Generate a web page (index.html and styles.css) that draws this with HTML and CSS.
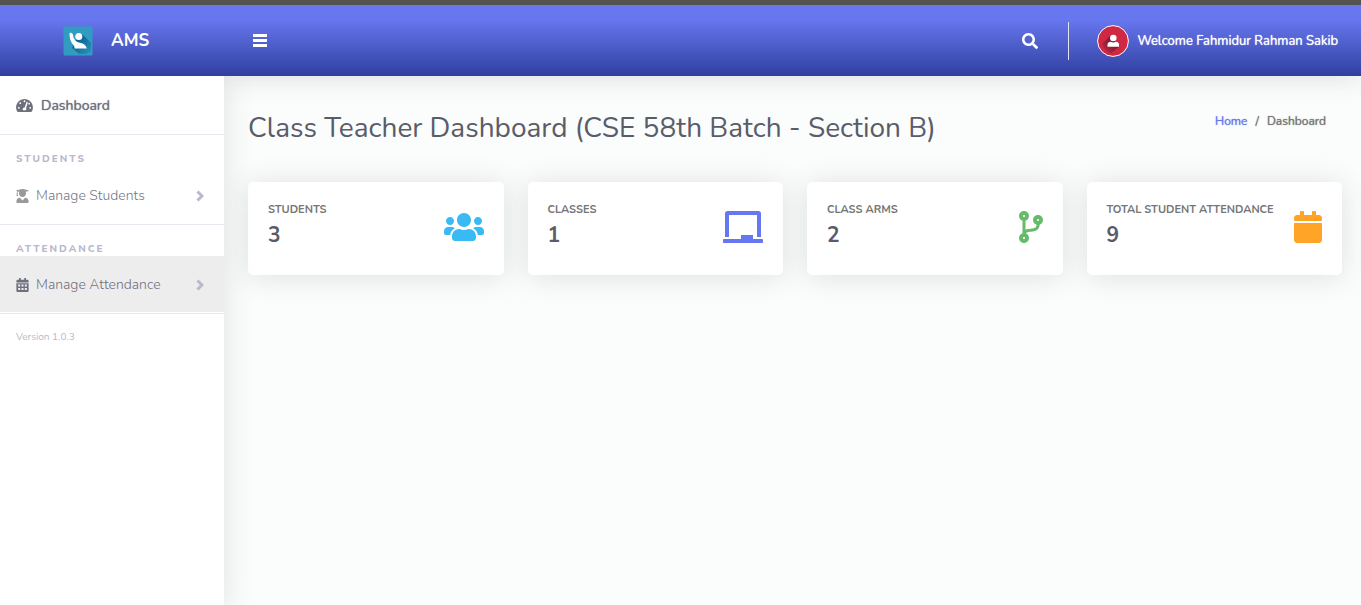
FILE: index.html
```html
<!DOCTYPE html>
<html lang="en">
<head>
<meta charset="utf-8">
<title>AMS - Dashboard</title>
<link rel="stylesheet" href="styles.css">
</head>
<body>
<header class="topbar">
  <a class="brand" href="#">
    <svg class="brand-logo" viewBox="0 0 30 30" aria-hidden="true">
      <defs><linearGradient id="logo-shade" x1="0" y1="0" x2="1" y2="1"><stop offset="0.3" stop-color="#096394"/><stop offset="1" stop-color="#096394" stop-opacity="0.1"/></linearGradient></defs>
      <rect x="0.5" y="0.5" width="29" height="29" rx="1.5" fill="#329bc1"/>
      <path d="M17 8L20 9L28 17V25L24 28H16L9 22L13 14Z" fill="url(#logo-shade)"/>
      <circle cx="15.8" cy="10.5" r="3.5" fill="#fff"/>
      <path d="M6.500 7.500Q6.500 6.300 8 6.800Q9.800 7.200 10 9Q10.300 13 12.500 14.800Q14.500 16.500 18 17Q22.800 18 23.800 22.500H11.500Q11.800 20.500 10.500 19Q6.500 15 6.500 8Z" fill="#fff"/>
    </svg>
    <span>AMS</span>
  </a>
  <button class="icon-button menu-button" type="button" aria-label="Toggle menu">
    <svg class="menu-icon" viewBox="0 0 14 14"><path d="M0 0h14v3H0zM0 5h14v3H0zM0 10h14v3H0z"/></svg>
  </button>
  <div class="topbar-tools">
    <button class="icon-button" type="button" aria-label="Search">
      <svg class="search-icon" viewBox="0 0 512 512"><path d="M505 442.700L405.300 343c-4.500-4.500-10.600-7-17-7H372c27.600-35.300 44-79.700 44-128C416 93.100 322.900 0 208 0S0 93.100 0 208s93.100 208 208 208c48.300 0 92.700-16.400 128-44v16.300c0 6.400 2.500 12.500 7 17l99.700 99.700c9.400 9.400 24.600 9.400 33.900 0l28.300-28.300c9.400-9.400 9.400-24.600.1-34zM208 336c-70.700 0-128-57.200-128-128 0-70.700 57.200-128 128-128 70.700 0 128 57.200 128 128 0 70.700-57.200 128-128 128z"/></svg>
    </button>
    <span class="divider"></span>
    <a class="profile" href="#">
      <svg class="avatar" viewBox="0 0 32 32" aria-hidden="true">
        <defs><linearGradient id="avatar-shade" x1="1" y1="0" x2="0" y2="1"><stop offset="0.3" stop-color="#741a2f"/><stop offset="1" stop-color="#d02842"/></linearGradient></defs>
        <circle cx="16" cy="16" r="15.4" fill="#d02842" stroke="#fff"/>
        <path d="M13.500 10.500L5 19Q7 26 14 28.500L22 21.500Z" fill="url(#avatar-shade)"/>
        <circle cx="16.300" cy="13" r="3.300" fill="#fff"/>
        <path d="M10.500 21.700V19.800Q10.500 17 13.500 16.700Q16.300 18.200 19.100 16.700Q22 17 22 19.800V21.700Z" fill="#fff"/>
      </svg>
      <span>Welcome Fahmidur Rahman Sakib</span>
    </a>
  </div>
</header>
<div class="shell">
  <nav class="sidebar">
    <a class="nav-link nav-home" href="#">
      <svg class="gauge-icon" viewBox="0 0 576 512"><path d="M288 32C128.940 32 0 160.940 0 320c0 52.800 14.250 102.260 39.060 144.800 5.610 9.620 16.300 15.200 27.440 15.200h443c11.140 0 21.830-5.580 27.440-15.200C561.750 422.260 576 372.800 576 320c0-159.060-128.940-288-288-288z"/><g class="gauge-marks"><circle cx="288" cy="112" r="32"/><circle cx="144" cy="176" r="32"/><circle cx="96" cy="336" r="32"/><circle cx="480" cy="336" r="32"/><circle cx="446" cy="194" r="30"/><path d="M360 132L405 147L343 343Q357 384 338 416H238Q216 384 235 350Q252 323 294 320Z"/></g></svg>
      <span>Dashboard</span>
    </a>
    <h2 class="nav-heading">Students</h2>
    <a class="nav-link nav-students" href="#">
      <svg class="nav-icon" viewBox="0 0 448 512"><path d="M319.400 320.600L224 416l-95.400-95.400C57.100 323.700 0 382.200 0 454.400v9.600c0 26.500 21.500 48 48 48h352c26.500 0 48-21.500 48-48v-9.600c0-72.200-57.100-130.700-128.600-133.800zM13.600 79.800l6.400 1.500v58.400c-7 4.200-12 11.500-12 20.300 0 8.400 4.600 15.400 11.100 19.700L3.500 242c-1.700 6.900 2.100 14 7.600 14h41.800c5.500 0 9.300-7.100 7.600-14l-15.600-62.300C51.400 175.400 56 168.400 56 160c0-8.800-5-16.100-12-20.300V87.100l66 15.900c-8.600 17.200-14 36.400-14 57 0 70.700 57.300 128 128 128s128-57.300 128-128c0-20.600-5.300-39.800-14-57l96.300-23.200c18.200-4.400 18.200-27.100 0-31.500l-190.400-46c-13-3.100-26.700-3.100-39.700 0L13.600 48.200c-18.100 4.400-18.100 27.100 0 31.600z"/></svg>
      <span>Manage Students</span>
      <svg class="chevron" viewBox="0 0 8 12"><path d="M1.500 1.500L6 6L1.500 10.500"/></svg>
    </a>
    <h2 class="nav-heading">Attendance</h2>
    <a class="nav-link nav-active" href="#">
      <svg class="nav-icon" viewBox="0 0 448 512"><path fill-rule="evenodd" d="M0 192H448V464c0 26.500-21.500 48-48 48H48c-26.500 0-48-21.500-48-48zM64 236v76h76v-76zM186 236v76h76v-76zM308 236v76h76v-76zM64 364v76h76v-76zM186 364v76h76v-76zM308 364v76h76v-76zM448 148v-36c0-26.500-21.500-48-48-48h-48V12c0-6.600-5.400-12-12-12h-40c-6.600 0-12 5.400-12 12v52H160V12c0-6.600-5.400-12-12-12h-40c-6.600 0-12 5.400-12 12v52H48C21.500 64 0 85.500 0 112v36c0 6.600 5.400 12 12 12h424c6.600 0 12-5.400 12-12z"/></svg>
      <span>Manage Attendance</span>
      <svg class="chevron" viewBox="0 0 8 12"><path d="M1.500 1.500L6 6L1.500 10.500"/></svg>
    </a>
    <p class="version">Version 1.0.3</p>
  </nav>
  <main class="content">
    <div class="page-head">
      <h1>Class Teacher Dashboard (CSE 58th Batch - Section B)</h1>
      <nav class="crumbs" aria-label="Breadcrumb"><a href="#">Home</a><span>/</span><span>Dashboard</span></nav>
    </div>
    <div class="cards">
      <section class="card">
        <div><h2>Students</h2><p>3</p></div>
        <svg class="card-icon users" viewBox="0 0 640 512"><path d="M96 224c35.300 0 64-28.700 64-64s-28.700-64-64-64-64 28.700-64 64 28.700 64 64 64zm448 0c35.300 0 64-28.700 64-64s-28.700-64-64-64-64 28.700-64 64 28.700 64 64 64zm32 32h-64c-17.600 0-33.500 7.100-45.100 18.600 40.300 22.100 68.900 62 75.100 109.400h66c17.700 0 32-14.300 32-32v-32c0-35.300-28.700-64-64-64zm-256 0c61.900 0 112-50.100 112-112S381.900 32 320 32 208 82.100 208 144s50.100 112 112 112zm76.800 32h-8.300c-20.800 10-43.900 16-68.500 16s-47.600-6-68.500-16h-8.300C179.600 288 128 339.600 128 403.200V432c0 26.500 21.500 48 48 48h288c26.500 0 48-21.500 48-48v-28.800c0-63.600-51.600-115.200-115.200-115.200zm-223.700-13.400C161.500 263.100 145.600 256 128 256H64c-35.300 0-64 28.700-64 64v32c0 17.700 14.300 32 32 32h65.900c6.300-47.400 34.900-87.300 75.200-109.400z"/></svg>
      </section>
      <section class="card">
        <div><h2>Classes</h2><p>1</p></div>
        <svg class="card-icon board" viewBox="0 0 640 512"><path d="M96 64h448v352h64V40c0-22.060-17.940-40-40-40H72C49.940 0 32 17.940 32 40v376h64V64zm528 384H480v-64H288v64H16c-8.840 0-16 7.160-16 16v32c0 8.840 7.160 16 16 16h608c8.840 0 16-7.160 16-16v-32c0-8.840-7.160-16-16-16z"/></svg>
      </section>
      <section class="card">
        <div><h2>Class Arms</h2><p>2</p></div>
        <svg class="card-icon branch" viewBox="0 0 384 512"><path d="M384 144c0-44.200-35.800-80-80-80s-80 35.800-80 80c0 36.400 24.300 67.100 57.500 76.800-.6 16.100-4.200 28.500-11 36.900-15.400 19.200-49.300 22.400-85.200 25.700-28.200 2.600-57.400 5.400-81.300 16.900v-144c32.500-10.200 56-40.500 56-76.300 0-44.200-35.800-80-80-80S0 35.800 0 80c0 35.800 23.500 66.100 56 76.300v199.300C23.500 365.900 0 396.200 0 432c0 44.200 35.800 80 80 80s80-35.800 80-80c0-34-21.200-63.100-51.200-74.600 3.100-5.200 7.800-9.800 14.900-13.400 16.200-8.200 40.400-10.400 66.100-12.800 42.200-3.900 90-8.400 118.200-43.400 14-17.400 21.100-39.800 21.600-67.900 31.600-10.800 54.400-40.700 54.400-75.900zM80 64c8.800 0 16 7.200 16 16s-7.200 16-16 16-16-7.200-16-16 7.200-16 16-16zm0 384c-8.800 0-16-7.200-16-16s7.200-16 16-16 16 7.200 16 16-7.200 16-16 16zm224-320c8.800 0 16 7.200 16 16s-7.200 16-16 16-16-7.200-16-16 7.200-16 16-16z"/></svg>
      </section>
      <section class="card">
        <div><h2>Total Student Attendance</h2><p>9</p></div>
        <svg class="card-icon calendar" viewBox="0 0 448 512"><path d="M12 192h424c6.600 0 12 5.400 12 12v260c0 26.500-21.500 48-48 48H48c-26.500 0-48-21.500-48-48V204c0-6.600 5.400-12 12-12zm436-44v-36c0-26.500-21.500-48-48-48h-48V12c0-6.600-5.400-12-12-12h-40c-6.600 0-12 5.400-12 12v52H160V12c0-6.600-5.400-12-12-12h-40c-6.600 0-12 5.400-12 12v52H48C21.500 64 0 85.500 0 112v36c0 6.600 5.400 12 12 12h424c6.600 0 12-5.400 12-12z"/></svg>
      </section>
    </div>
  </main>
</div>
</body>
</html>
```

FILE: styles.css
```css
* { box-sizing: border-box; }
body {
  margin: 0;
  min-height: 100vh;
  display: flex;
  flex-direction: column;
  background: #fafdfb;
  color: #757575;
  font-family: Nunito, Lato, sans-serif;
  font-size: 14px;
  line-height: 20px;
}
h1, h2, p { margin: 0; font-weight: 400; }
a { color: inherit; text-decoration: none; }
svg { display: block; flex: none; fill: currentColor; }

.topbar {
  position: relative;
  z-index: 1;
  display: flex;
  align-items: center;
  height: 76px;
  border-top: 5px solid #555250;
  background: linear-gradient(#6777ef 20%, #303f9f);
  box-shadow: 0 2px 28px rgba(58, 59, 69, 0.15);
  color: #fff;
}
.brand {
  display: flex;
  align-items: center;
  gap: 18px;
  width: 224px;
  padding-left: 63px;
  font-size: 17px;
  font-weight: 700;
  line-height: 22px;
}
.brand-logo { width: 30px; height: 30px; }
.icon-button {
  padding: 0;
  border: 0;
  background: none;
  color: inherit;
  cursor: pointer;
}
.menu-button { margin-left: 29px; }
.menu-icon { width: 14px; height: 14px; }
.search-icon { width: 16px; height: 16px; }
.topbar-tools {
  display: flex;
  align-items: center;
  margin-left: auto;
  padding-right: 23px;
}
.divider {
  width: 1px;
  height: 38px;
  margin: 0 28px 0 30px;
  background: #e3e6f0;
}
.profile {
  display: flex;
  align-items: center;
  gap: 8px;
  font-size: 13px;
}
.profile span, .nav-home span, .crumbs { text-shadow: 0 0 1px currentColor; }
.avatar { width: 32px; height: 32px; }

.shell { display: flex; flex: 1; }
.sidebar {
  position: relative;
  z-index: 2;
  flex: none;
  width: 224px;
  background: #fff;
  box-shadow: 0 2px 28px rgba(58, 59, 69, 0.15);
  clip-path: inset(0 -40px 0 0);
}
.nav-link {
  display: flex;
  align-items: center;
  padding: 1px 20px 0 16px;
  gap: 7px;
  height: 56px;
}
.nav-home {
  height: 59px;
  gap: 8px;
  border-bottom: 1px solid #e8e9f1;
  color: #6e707e;
}
.gauge-icon { width: 17px; height: 15px; }
.gauge-marks { fill: #fff; }
.nav-icon { width: 13px; height: 14px; }
.nav-heading {
  padding: 14px 16px 0;
  height: 31px;
  color: #b7b9cc;
  font-size: 10px;
  font-weight: 800;
  letter-spacing: 2px;
  text-transform: uppercase;
}
.nav-students {
  height: 59px;
  border-bottom: 1px solid #e8e9f1;
  color: #757785;
}
.nav-students span, .nav-active span { font-weight: 300; }
.nav-students .nav-icon { color: #999; }
.nav-active { background: #ededed; color: #6e707e; }
.chevron {
  width: 8px;
  height: 12px;
  margin-left: auto;
  fill: none;
  stroke: #b7b9cc;
  stroke-width: 3;
}
.version {
  margin-top: 1px;
  padding: 13px 16px;
  border-top: 1px solid #e8e9ec;
  color: #b7b9cc;
  font-size: 10px;
}

.content { flex: 1; min-width: 0; padding: 34px 19px 24px 24px; }
.page-head {
  display: flex;
  justify-content: space-between;
  align-items: flex-start;
  margin-bottom: 36px;
}
.page-head h1 {
  color: #5a5c69;
  font-size: 28px;
  line-height: 36px;
}
.crumbs {
  display: flex;
  gap: 8px;
  padding: 1px 16px 0 0;
  font-size: 12px;
}
.crumbs a { color: #6777ef; }
.cards {
  display: grid;
  grid-template-columns: repeat(4, 1fr);
  gap: 24px;
}
.card {
  display: flex;
  align-items: flex-start;
  justify-content: space-between;
  min-height: 93px;
  padding: 20px;
  border-radius: 5px;
  background: #fff;
  box-shadow: 0 2px 28px rgba(58, 59, 69, 0.15);
}
.card h2 {
  font-size: 11px;
  font-weight: 700;
  line-height: 16px;
  text-transform: uppercase;
}
.card p {
  margin-top: 4px;
  color: #5a5c69;
  font-size: 21px;
  font-weight: 700;
  line-height: 26px;
}
.card-icon { height: 32px; margin-top: 9px; }
.users { color: #3abaf4; }
.board { color: #6777ef; }
.branch { color: #66bb6a; }
.calendar { color: #ffa426; }
```
